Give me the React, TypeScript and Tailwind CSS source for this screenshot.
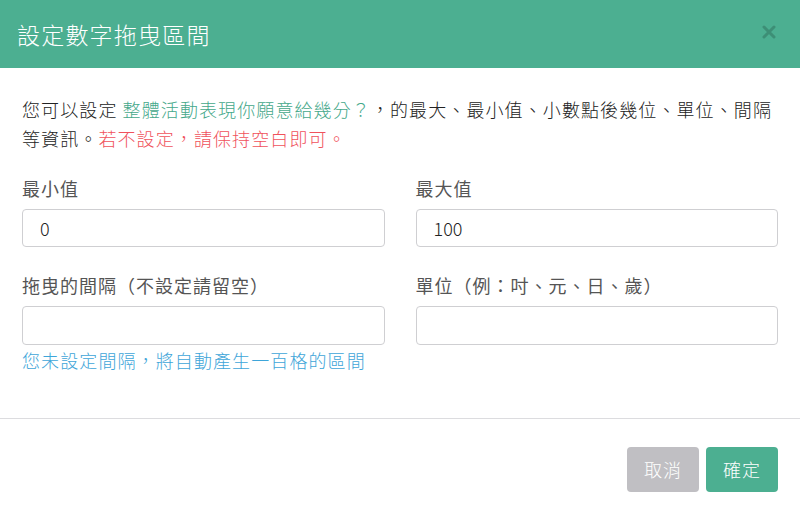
import React from "react";

const font = { fontFamily: '"Noto Sans CJK TC", "Noto Sans", sans-serif' };

export default function App() {
  return (
    <div className="w-[800px] h-[512px] bg-white flex flex-col overflow-hidden font-light" style={font}>
      <div className="h-[68px] bg-[#4caf91] flex items-center justify-between pl-[17px] pr-[24px] shrink-0">
        <div className="text-white text-[23px] tracking-[1.2px] leading-none">設定數字拖曳區間</div>
        <svg width="14" height="14" viewBox="0 0 14 14" className="mt-[-4px]">
          <path d="M2 2 L12 12 M12 2 L2 12" stroke="#3d8f76" strokeWidth="3" strokeLinecap="round" />
        </svg>
      </div>
      <div className="px-[22px] pt-[27px] flex-1">
        <p className="text-[18px] leading-[29px] tracking-[1.1px] text-[#222]">
          您可以設定 <span className="text-[#45a88a]">整體活動表現你願意給幾分？</span>，的最大、最小值、小數點後幾位、單位、間隔等資訊。<span className="text-[#f0525c]">若不設定，請保持空白即可。</span>
        </p>
        <div className="grid grid-cols-2 gap-x-[31px] mt-[22px]">
          <div>
            <div className="text-[18px] leading-[27px] tracking-[1px] text-[#555] font-normal">最小值</div>
            <div className="mt-[7px] h-[38px] border border-[#cfcfd2] rounded-[4px] flex items-center px-[17px] text-[18px] text-[#222]">0</div>
          </div>
          <div>
            <div className="text-[18px] leading-[27px] tracking-[1px] text-[#555] font-normal">最大值</div>
            <div className="mt-[7px] h-[38px] border border-[#cfcfd2] rounded-[4px] flex items-center px-[17px] text-[18px] text-[#222]">100</div>
          </div>
          <div className="mt-[25px]">
            <div className="text-[18px] leading-[27px] tracking-[1px] text-[#555] font-normal">拖曳的間隔（不設定請留空）</div>
            <div className="mt-[7px] h-[39px] border border-[#cfcfd2] rounded-[4px]"></div>
            <div className="mt-[2px] text-[18px] leading-[26px] tracking-[1.1px] text-[#3ea5d9]">您未設定間隔，將自動產生一百格的區間</div>
          </div>
          <div className="mt-[25px]">
            <div className="text-[18px] leading-[27px] tracking-[1px] text-[#555] font-normal">單位（例：吋、元、日、歲）</div>
            <div className="mt-[7px] h-[39px] border border-[#cfcfd2] rounded-[4px]"></div>
          </div>
        </div>
      </div>
      <div className="border-t border-[#dcdcdf] pt-[28px] pb-[20px] pr-[22px] flex justify-end gap-[7px] shrink-0">
        <button className="w-[72px] h-[45px] rounded-[4px] bg-[#c0bfc3] text-white text-[18px] tracking-[1px]">取消</button>
        <button className="w-[72px] h-[45px] rounded-[4px] bg-[#4caf91] text-white text-[18px] tracking-[1px]">確定</button>
      </div>
    </div>
  );
}
